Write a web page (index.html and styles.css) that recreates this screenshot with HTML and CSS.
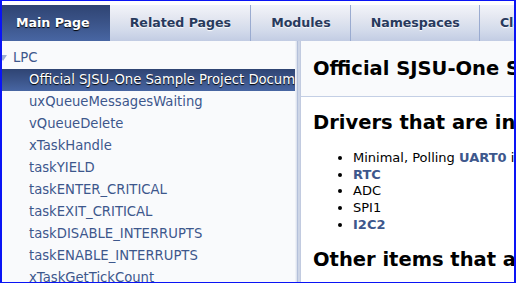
FILE: index.html
```html
<!DOCTYPE html>
<html lang="en">
<head>
  <meta charset="UTF-8" />
  <title>SJSU-One: Official SJSU-One Sample Project Documentation</title>
  <link rel="stylesheet" href="styles.css">
</head>
<body>
  <div class="window">
    <div class="topgap"></div>

    <ul class="tablist">
      <li class="current"><a href="#">Main Page</a></li>
      <li><a href="#">Related Pages</a></li>
      <li><a href="#">Modules</a></li>
      <li><a href="#">Namespaces</a></li>
      <li><a href="#">Classes</a></li>
      <li><a href="#">Files</a></li>
    </ul>

    <div class="main">
      <div class="navtree">
        <div class="item root"><span class="arrow"></span><a href="#">LPC</a></div>
        <div class="item selected"><a href="#">Official SJSU-One Sample Project Documentation</a></div>
        <div class="item"><a href="#">uxQueueMessagesWaiting</a></div>
        <div class="item"><a href="#">vQueueDelete</a></div>
        <div class="item"><a href="#">xTaskHandle</a></div>
        <div class="item"><a href="#">taskYIELD</a></div>
        <div class="item"><a href="#">taskENTER_CRITICAL</a></div>
        <div class="item"><a href="#">taskEXIT_CRITICAL</a></div>
        <div class="item"><a href="#">taskDISABLE_INTERRUPTS</a></div>
        <div class="item"><a href="#">taskENABLE_INTERRUPTS</a></div>
        <div class="item"><a href="#">xTaskGetTickCount</a></div>
      </div>

      <div class="splitbar"></div>

      <div class="doc">
        <div class="header">
          <div class="headertitle">
            <div class="title">Official SJSU-One Sample Project Documentation</div>
          </div>
        </div>
        <div class="contents">
          <h1>Drivers that are included</h1>
          <ul>
            <li>Minimal, Polling <a class="el" href="#">UART0</a> interface</li>
            <li><a class="el" href="#">RTC</a></li>
            <li>ADC</li>
            <li>SPI1</li>
            <li><a class="el" href="#">I2C2</a></li>
          </ul>
          <h1>Other items that are included</h1>
        </div>
      </div>
    </div>
  </div>
</body>
</html>
```

FILE: styles.css
```css
* {
  box-sizing: border-box;
}
body, html {
  margin: 0;
  padding: 0;
  height: 100vh;
  overflow: hidden;
  background: #fff;
  font-family: "DejaVu Sans", Verdana, sans-serif;
  font-size: 13px;
  line-height: 1.3;
  color: #000;
}
a {
  text-decoration: none;
}

/* blue frame lying over the whole capture */
.window {
  height: 100vh;
  display: flex;
  flex-direction: column;
  overflow: hidden;
}
.window::after {
  content: "";
  position: fixed;
  top: 0;
  left: 0;
  right: 0;
  bottom: 0;
  border: solid #0a14f5;
  border-width: 1px 2px 1px 2px;
  pointer-events: none;
}
.topgap {
  height: 5px;
  flex: none;
}

/* tabs */
.tablist {
  flex: none;
  display: flex;
  margin: 0 0 0 -4px;
  padding: 0;
  list-style: none;
  height: 36px;
  background: linear-gradient(#f2f4f9, #e6e9f2 30%, #d3dbeb 70%, #c2cce3);
  white-space: nowrap;
}
.tablist li a {
  display: block;
  padding: 0 20px;
  line-height: 36px;
  font-weight: bold;
  font-size: 12.6px;
  color: #283a5d;
  text-shadow: 0 1px 1px rgba(255, 255, 255, 0.9);
  box-shadow: inset -1px 0 #9aabd0;
}
.tablist li.current a {
  color: #fff;
  text-shadow: 0 1px 1px rgba(0, 0, 0, 1);
  background: linear-gradient(#2f4473, #3b5489 50%, #4866a3);
  box-shadow: none;
}

/* tree + content */
.main {
  flex: 1;
  display: flex;
  min-height: 0;
}
.navtree {
  width: 295px;
  flex: none;
  background: #f9fafc;
  padding-top: 6px;
  overflow: hidden;
  white-space: nowrap;
}
.item {
  height: 22px;
  line-height: 22px;
  padding-left: 29px;
  font-size: 13.2px;
}
.item a {
  color: #3d578c;
}
.item.root {
  display: flex;
  align-items: center;
  padding-left: 0;
}
.arrow {
  width: 0;
  height: 0;
  margin: 0 6px 1px -1px;
  border-left: 4px solid transparent;
  border-right: 4px solid transparent;
  border-top: 6px solid #9cafd4;
}
.item.selected {
  background: linear-gradient(#2f4473, #3b5489 50%, #4866a3);
}
.item.selected a {
  color: #fff;
  text-shadow: 0 1px 1px rgba(0, 0, 0, 1);
}
.splitbar {
  width: 6px;
  flex: none;
  background: linear-gradient(to right, #eef1f7 0 1px, #dfe4ef 1px 2px, #b4c0da 2px 3px, #cdd5e6 3px 5px, #c2cbe0 5px 6px);
}
.doc {
  flex: 1;
  min-width: 0;
  overflow: hidden;
  white-space: nowrap;
}
.header {
  background: #f9fafc;
  border-bottom: 1px solid #c4cfe5;
}
.headertitle {
  padding: 5px 5px 5px 10px;
}
.title {
  font-size: 150%;
  font-weight: bold;
  margin: 10px 2px;
}
.contents {
  margin: 10px 8px 0 12px;
}
.contents h1 {
  font-size: 150%;
  margin: 13px 0;
}
.contents ul {
  margin: 14px 0 12px;
  padding-left: 40px;
}
a.el {
  font-weight: bold;
  color: #3d578c;
}
```
